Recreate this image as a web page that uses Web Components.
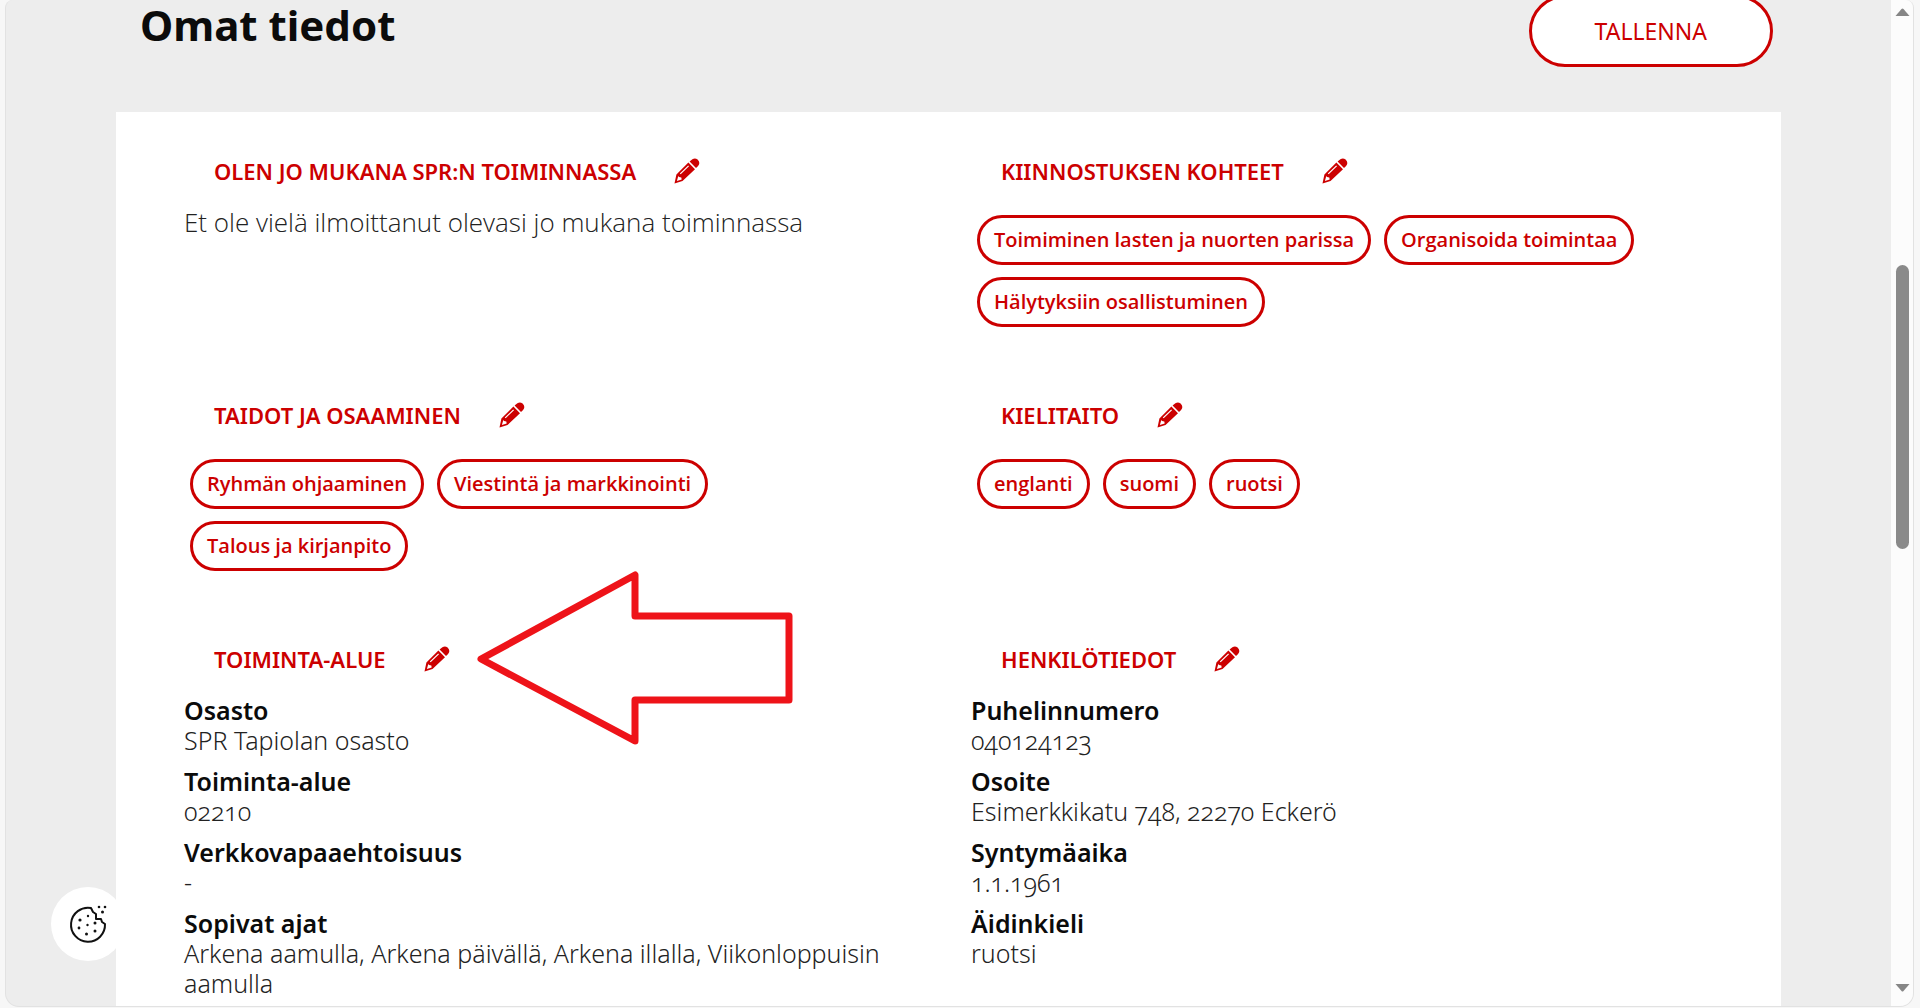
<!DOCTYPE html>
<html lang="fi">
<head>
<meta charset="utf-8">
<title>Omat tiedot</title>
<style>
  body {
    margin: 0;
    background: #f7f7f7;
    font-family: "Noto Sans", "Open Sans", sans-serif;
    font-variant-numeric: oldstyle-nums;
    --text-font: "Open Sans", "Noto Sans", sans-serif;
    --red: #cc0000;
  }
</style>
</head>
<body>

<app-window>
  <page-header>Omat tiedot<span slot="action">TALLENNA</span></page-header>
  <profile-panel>
    <profile-section heading="OLEN JO MUKANA SPR:N TOIMINNASSA">
      <plain-text>Et ole vielä ilmoittanut olevasi jo mukana toiminnassa</plain-text>
    </profile-section>
    <profile-section heading="KIINNOSTUKSEN KOHTEET">
      <tag-list>
        <tag-chip>Toimiminen lasten ja nuorten parissa</tag-chip>
        <tag-chip>Organisoida toimintaa</tag-chip>
        <tag-chip>Hälytyksiin osallistuminen</tag-chip>
      </tag-list>
    </profile-section>
    <profile-section heading="TAIDOT JA OSAAMINEN">
      <tag-list>
        <tag-chip>Ryhmän ohjaaminen</tag-chip>
        <tag-chip>Viestintä ja markkinointi</tag-chip>
        <tag-chip>Talous ja kirjanpito</tag-chip>
      </tag-list>
    </profile-section>
    <profile-section heading="KIELITAITO">
      <tag-list>
        <tag-chip>englanti</tag-chip>
        <tag-chip>suomi</tag-chip>
        <tag-chip>ruotsi</tag-chip>
      </tag-list>
    </profile-section>
    <profile-section heading="TOIMINTA-ALUE">
      <info-item label="Osasto">SPR Tapiolan osasto</info-item>
      <info-item label="Toiminta-alue">02210</info-item>
      <info-item label="Verkkovapaaehtoisuus">-</info-item>
      <info-item label="Sopivat ajat">Arkena aamulla, Arkena päivällä, Arkena illalla, Viikonloppuisin aamulla</info-item>
      <pointer-arrow slot="overlay"></pointer-arrow>
    </profile-section>
    <profile-section heading="HENKILÖTIEDOT">
      <info-item label="Puhelinnumero">040124123</info-item>
      <info-item label="Osoite">Esimerkkikatu 748, 22270 Eckerö</info-item>
      <info-item label="Syntymäaika">1.1.1961</info-item>
      <info-item label="Äidinkieli">ruotsi</info-item>
    </profile-section>
  </profile-panel>
  <cookie-button slot="floating"></cookie-button>
</app-window>

<script>
function define(name, html, setup) {
  const template = document.createElement("template");
  template.innerHTML = html;

  customElements.define(name, class extends HTMLElement {
    constructor() {
      super();
      this.attachShadow({ mode: "open" }).appendChild(template.content.cloneNode(true));
    }

    connectedCallback() {
      if (setup) setup(this, this.shadowRoot);
    }
  });
}

define("app-window", `
<style>
  :host {
    display: flex;
    position: relative;
    box-sizing: border-box;
    height: calc(100vh - 1px);
    margin: 0 6px 0 5px;
    border: 1px solid #e2e2e2;
    border-top: 0;
    border-radius: 8px 8px 14px 14px;
    background: #ededed;
    overflow: hidden;
  }
  main {
    flex: 1;
    min-width: 0;
    padding: 0 110px;
  }
</style>
<main><slot></slot></main>
<scroll-rail></scroll-rail>
<slot name="floating"></slot>
`);

// Scrollbar column on the right edge of the window
define("scroll-rail", `
<style>
  :host {
    display: flex;
    flex-direction: column;
    align-items: center;
    justify-content: space-between;
    box-sizing: border-box;
    width: 22px;
    padding: 8px 0 14px;
    background: #fcfcfc;
  }
  svg {
    display: block;
    fill: #868686;
  }
  .track {
    flex: 1;
    display: flex;
    flex-direction: column;
  }
  .before { flex: 249; }
  .thumb {
    flex: 283;
    width: 13px;
    border-radius: 7px;
    background: #8a8a8a;
  }
  .after { flex: 435; }
</style>
<svg width="15" height="8" viewBox="0 0 15 8"><path d="M0.500 8 L6.500 1 Q7.500 0 8.500 1 L14.500 8 Z"/></svg>
<div class="track"><div class="before"></div><div class="thumb"></div><div class="after"></div></div>
<svg width="15" height="8" viewBox="0 0 15 8"><path d="M0.500 0 L6.500 7 Q7.500 8 8.500 7 L14.500 0 Z"/></svg>
`);

define("page-header", `
<style>
  :host {
    display: flex;
    justify-content: space-between;
    align-items: flex-start;
    margin-top: -5px;
    padding: 0 8px 0 24px;
  }
  h1 {
    margin: 5px 0 0;
    font-size: 42px;
    font-weight: 700;
    line-height: 50px;
    color: #0b0b0b;
  }
  button {
    height: 72px;
    padding: 0 63px;
    border: 3px solid var(--red);
    border-radius: 36px;
    background: #fff;
    color: var(--red);
    font-family: inherit;
    font-size: 23px;
  }
</style>
<h1><slot></slot></h1>
<button type="button"><slot name="action"></slot></button>
`);

define("profile-panel", `
<style>
  :host {
    display: grid;
    grid-template-columns: 1fr 1fr;
    margin-top: 45px;
    padding: 44px 23px 44px 68px;
    background: #fff;
  }
</style>
<slot></slot>
`);

define("profile-section", `
<style>
  :host {
    display: block;
    position: relative;
    padding: 0 60px 66px 0;
  }
  header {
    display: flex;
    align-items: center;
    gap: 38px;
    height: 30px;
    margin-bottom: 21px;
    padding-left: 30px;
    color: var(--red);
  }
  h2 {
    margin: 0;
    font-size: 22px;
    font-weight: 600;
    line-height: 30px;
  }
  button {
    display: block;
    padding: 0;
    border: 0;
    background: none;
    color: inherit;
  }
  svg {
    display: block;
  }
</style>
<header>
  <h2></h2>
  <button type="button">
    <svg width="26" height="26" viewBox="0 0 26 26" fill="currentColor">
      <path d="M16.800 2.400 Q20.400 -1.200 23.600 1.600 Q26.800 4.800 24.100 8 L22 10 L15.600 3.600 Z"/>
      <path fill-rule="evenodd" d="M14.400 4.600 L21 11.200 L8.500 23 L0.500 25.500 L2.400 16.600 Z M4.300 17.900 L2.900 22.900 L7.700 21.600 L7.300 19.400 L5 18.900 Z M6.700 16.200 L15 8.300 L14.200 7.500 L5.800 15.400 Z"/>
    </svg>
  </button>
</header>
<slot></slot>
<slot name="overlay"></slot>
`, (host, root) => {
  const heading = host.getAttribute("heading");
  root.querySelector("h2").textContent = heading;
  root.querySelector("button").setAttribute("aria-label", "Muokkaa: " + heading);
});

define("plain-text", `
<style>
  :host {
    display: block;
    font-family: var(--text-font);
    font-size: 26px;
    font-weight: 300;
    line-height: 30px;
    color: #222;
  }
</style>
<slot></slot>
`);

define("tag-list", `
<style>
  :host {
    display: flex;
    flex-wrap: wrap;
    gap: 12px 13px;
    padding: 8px 6px 7px;
  }
</style>
<slot></slot>
`);

define("tag-chip", `
<style>
  :host {
    box-sizing: border-box;
    height: 50px;
    padding: 0 14px;
    border: 3px solid var(--red);
    border-radius: 25px;
    color: var(--red);
    font-family: var(--text-font);
    font-size: 20px;
    font-weight: 600;
    line-height: 44px;
    white-space: nowrap;
  }
</style>
<slot></slot>
`);

define("info-item", `
<style>
  :host {
    display: block;
    margin-bottom: 11px;
    line-height: 30px;
  }
  dl, dd {
    margin: 0;
  }
  dt {
    font-size: 25px;
    font-weight: 600;
    color: #0b0b0b;
  }
  dd {
    font-size: 25px;
    font-weight: 300;
    color: #222;
  }
</style>
<dl>
  <dt></dt>
  <dd><slot></slot></dd>
</dl>
`, (host, root) => {
  root.querySelector("dt").textContent = host.getAttribute("label");
});

// Big outlined arrow lying over the section, pointing at its edit button
define("pointer-arrow", `
<style>
  :host {
    position: absolute;
    top: -74px;
    left: 292px;
    pointer-events: none;
  }
  svg {
    display: block;
  }
</style>
<svg width="320" height="180" viewBox="0 0 320 180" fill="none" stroke="#ee1319" stroke-width="7" stroke-linejoin="round">
  <path d="M5 89 L159 5 V46 H313 V130 H159 V171 Z"/>
</svg>
`);

define("cookie-button", `
<style>
  :host {
    position: absolute;
    left: 45px;
    bottom: 45px;
  }
  button {
    display: grid;
    place-items: center;
    width: 74px;
    height: 74px;
    padding: 0;
    border: 0;
    border-radius: 50%;
    background: #fff;
  }
</style>
<button type="button" aria-label="Evästeasetukset">
  <svg width="38" height="38" viewBox="0 0 38 38">
    <path fill="none" stroke="#111" stroke-width="2" stroke-linejoin="round" d="M22 3 A17 17 0 1 0 36 19 L33 17 L32 14 L27 14 L27 9 L24 7 Z"/>
    <g fill="#111">
      <circle cx="11" cy="15" r="1.600"/><circle cx="19" cy="11" r="1.200"/>
      <circle cx="10" cy="23" r="1.400"/><circle cx="18.500" cy="20" r="1.200"/>
      <circle cx="26" cy="18" r="1.500"/><circle cx="26" cy="26" r="1.500"/>
      <circle cx="17.500" cy="29" r="1.500"/>
      <circle cx="30" cy="2" r="1.300"/><circle cx="36" cy="2" r="1.300"/><circle cx="33.500" cy="7" r="1.500"/>
    </g>
  </svg>
</button>
`);
</script>
</body>
</html>
